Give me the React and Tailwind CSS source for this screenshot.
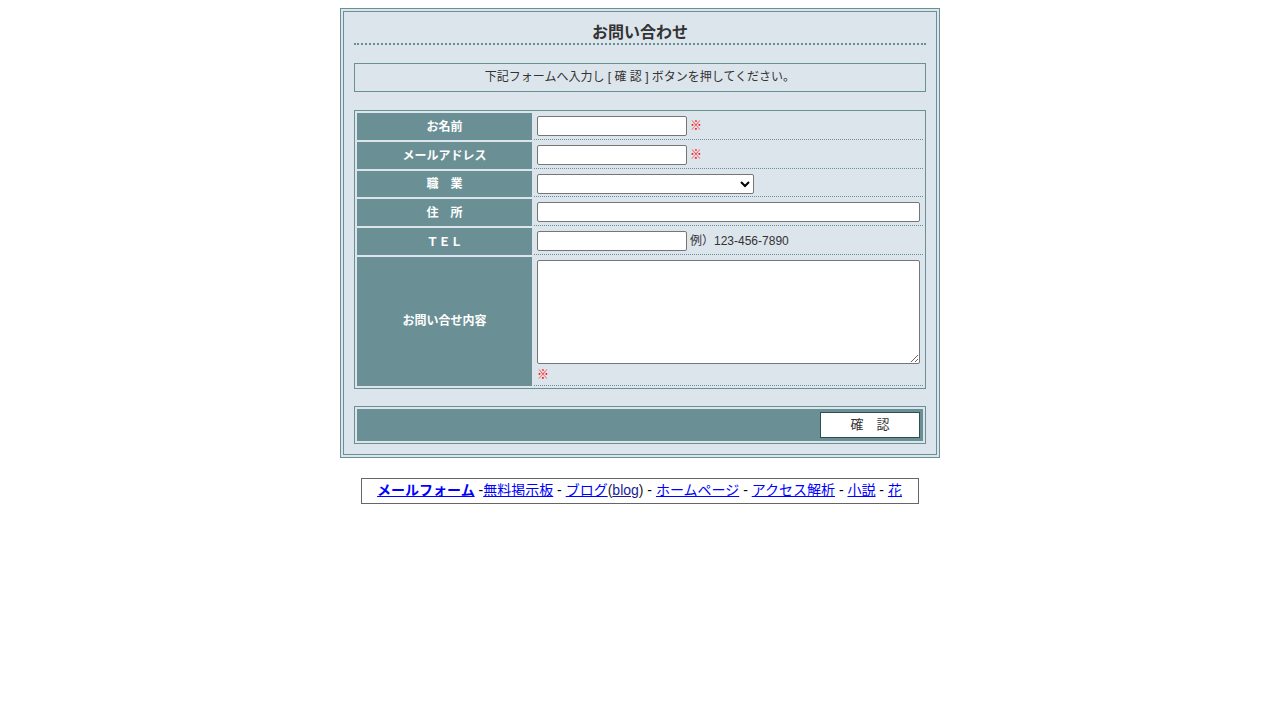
import React from 'react';

const FONT = { fontFamily: '"Liberation Sans", "Noto Sans CJK JP", sans-serif' };

const Req = () => <span className="text-[12px] font-black text-[#ff0000] ml-[3px] align-middle">※</span>;

const inputCls = 'h-[20px] border border-[#767676] rounded-[2px] bg-white px-[2px] text-[13px] align-middle';

const rows = [
  { label: 'お名前', h: 'h-[27px]', body: <><input type="text" className={`${inputCls} w-[150px]`} /><Req /></> },
  { label: 'メールアドレス', h: 'h-[27px]', body: <><input type="text" className={`${inputCls} w-[150px]`} /><Req /></> },
  {
    label: '職　業',
    h: 'h-[26px]',
    body: (
      <select className="h-[20px] w-[217px] border border-[#767676] rounded-[2px] bg-white text-[13px] align-middle">
        <option value=""></option>
      </select>
    ),
  },
  { label: '住　所', h: 'h-[27px]', body: <input type="text" className={`${inputCls} w-full block`} /> },
  {
    label: 'ＴＥＬ',
    h: 'h-[27px]',
    body: (
      <>
        <input type="text" className={`${inputCls} w-[150px]`} />
        <span className="ml-[3px] text-[12px] text-[#333] align-middle">例）123-456-7890</span>
      </>
    ),
  },
];

const App = () => {
  return (
    <div className="min-h-screen bg-white pt-[8px]" style={FONT}>
      <div className="w-[600px] mx-auto border border-[#6a9096] p-[2px] bg-[#dde5ec]">
        <div className="border border-[#6a9096] px-[10px] pt-[11px] pb-[10px]">
          <h1 className="text-[16px] leading-[20px] font-bold text-[#333] text-center border-b-2 border-dotted border-[#6a9096]">
            お問い合わせ
          </h1>

          <div className="mt-[18px] border border-[#6a9096] py-[6px] text-center text-[12px] leading-[15px] text-[#333]">
            下記フォームへ入力し [ 確 認 ] ボタンを押してください。
          </div>

          <table className="mt-[18px] w-full border border-[#6a9096] border-separate border-spacing-[2px]">
            <tbody>
              {rows.map((r) => (
                <tr key={r.label} className={r.h}>
                  <td className="w-[175px] p-0 bg-[#6a9096] text-white text-[12px] font-bold text-center align-middle">
                    {r.label}
                  </td>
                  <td className="px-[3px] py-0 border-b border-dotted border-[#6a9096] align-middle leading-[20px]">
                    {r.body}
                  </td>
                </tr>
              ))}
              <tr className="h-[128px]">
                <td className="w-[175px] bg-[#6a9096] text-white text-[12px] font-bold text-center align-middle">
                  お問い合せ内容
                </td>
                <td className="px-[3px] pt-[3px] pb-0 border-b border-dotted border-[#6a9096] align-top">
                  <textarea className="block w-full h-[104px] border border-[#767676] rounded-[2px] bg-white text-[13px]" />
                  <div className="leading-[20px] -ml-[3px]"><Req /></div>
                </td>
              </tr>
            </tbody>
          </table>

          <table className="mt-[17px] w-full border border-[#6a9096] border-separate border-spacing-[2px]">
            <tbody>
              <tr>
                <td className="bg-[#6a9096] h-[32px] px-[3px] text-right align-middle">
                  <button className="w-[100px] h-[26px] bg-white border border-[#2f4f4f] text-[13px] text-[#333] align-middle">
                    確　認
                  </button>
                </td>
              </tr>
            </tbody>
          </table>
        </div>
      </div>

      <div className="mt-[20px] w-[558px] mx-auto border border-[#666] h-[26px] flex items-center justify-center pr-[1px] text-[14px] text-black">
        <a href="#" className="font-bold text-[#0000ff] underline">メールフォーム</a>
        <span>&nbsp;-</span>
        <a href="#" className="text-[#0000ff] underline">無料掲示板</a>
        <span>&nbsp;-&nbsp;</span>
        <a href="#" className="text-[#0000ff] underline">ブログ</a>
        <span className="text-[#222]">(</span>
        <a href="#" className="text-[#1a1a9a] underline">blog</a>
        <span className="text-[#222]">)</span>
        <span>&nbsp;-&nbsp;</span>
        <a href="#" className="text-[#0000ff] underline">ホームページ</a>
        <span>&nbsp;-&nbsp;</span>
        <a href="#" className="text-[#0000ff] underline">アクセス解析</a>
        <span>&nbsp;-&nbsp;</span>
        <a href="#" className="text-[#0000ff] underline">小説</a>
        <span>&nbsp;-&nbsp;</span>
        <a href="#" className="text-[#0000ff] underline">花</a>
      </div>
    </div>
  );
};

export default App;
